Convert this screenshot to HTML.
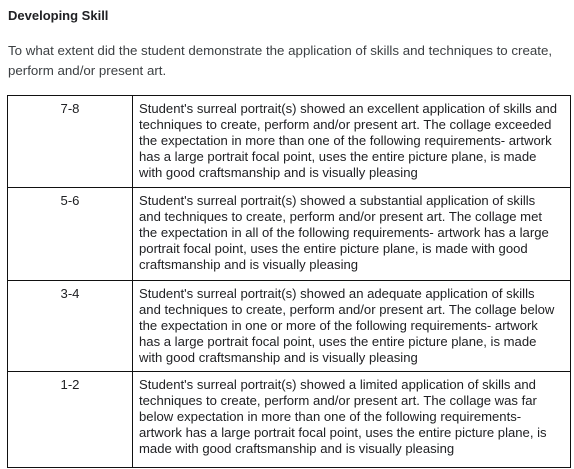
<!DOCTYPE html>
<html><head><meta charset="utf-8"><style>
body{margin:0;background:#fff;width:574px;height:469px;overflow:hidden;font-family:"Liberation Sans",Arial,sans-serif;color:#222;}
h1{position:absolute;left:8px;top:8px;margin:0;font-size:13px;font-weight:bold;color:#202124;}
p{position:absolute;left:8px;top:41px;margin:0;font-size:13.3px;line-height:20px;color:#3c4043;white-space:nowrap;}
table{position:absolute;left:7px;top:95px;border-collapse:collapse;width:564px;font-size:13.1px;line-height:16px;color:#202124;}
td{border:1.5px solid #111;vertical-align:top;padding:5px 6px 4px 6px;white-space:nowrap;}
td.n{width:112px;text-align:center;}
</style></head><body>
<h1>Developing Skill</h1>
<p>To what extent did the student demonstrate the application of skills and techniques to create,<br>perform and/or present art.</p>
<table>
<tr style="height:92px"><td class="n">7-8</td><td>Student's surreal portrait(s) showed an excellent application of skills and<br>techniques to create, perform and/or present art. The collage exceeded<br>the expectation in more than one of the following requirements- artwork<br>has a large portrait focal point, uses the entire picture plane, is made<br>with good craftsmanship and is visually pleasing</td></tr>
<tr style="height:93px"><td class="n">5-6</td><td>Student's surreal portrait(s) showed a substantial application of skills<br>and techniques to create, perform and/or present art. The collage met<br>the expectation in all of the following requirements- artwork has a large<br>portrait focal point, uses the entire picture plane, is made with good<br>craftsmanship and is visually pleasing</td></tr>
<tr style="height:91px"><td class="n">3-4</td><td>Student's surreal portrait(s) showed an adequate application of skills<br>and techniques to create, perform and/or present art. The collage below<br>the expectation in one or more of the following requirements- artwork<br>has a large portrait focal point, uses the entire picture plane, is made<br>with good craftsmanship and is visually pleasing</td></tr>
<tr style="height:96px"><td class="n">1-2</td><td>Student's surreal portrait(s) showed a limited application of skills and<br>techniques to create, perform and/or present art. The collage was far<br>below expectation in more than one of the following requirements-<br>artwork has a large portrait focal point, uses the entire picture plane, is<br>made with good craftsmanship and is visually pleasing</td></tr>
</table>
</body></html>
